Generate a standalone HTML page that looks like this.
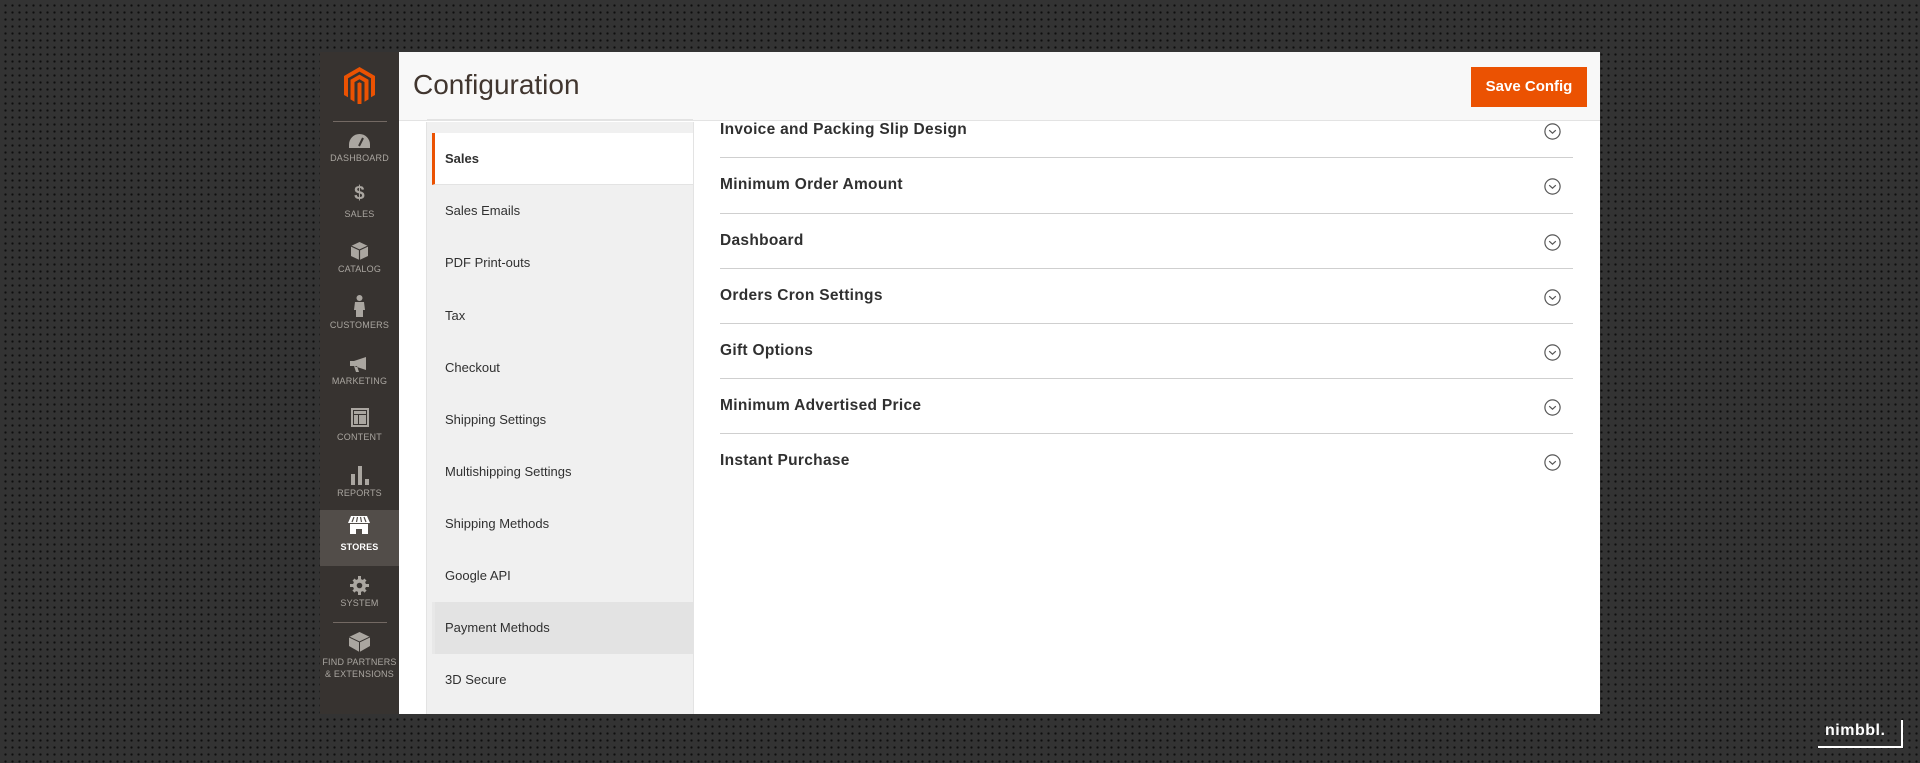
<!DOCTYPE html>
<html><head><meta charset="utf-8"><style>
*{margin:0;padding:0;box-sizing:border-box}
body{width:1920px;height:763px;overflow:hidden;background:#333;background-image:radial-gradient(#0e0e0e 1px,transparent 1.3px);background-size:7px 7px;background-position:2px 2px;font-family:"Liberation Sans","DejaVu Sans",sans-serif;position:relative}
.panel{position:absolute;left:320px;top:52px;width:1280px;height:662px;background:#fff;overflow:hidden}
.side{position:absolute;left:0;top:0;width:79px;height:662px;background:#373330}
.hdr{position:absolute;left:79px;top:0;right:0;height:69px;background:#f8f8f8;border-bottom:1px solid #e3e3e3}
.hdr h1{position:absolute;left:14px;top:17px;font-weight:normal;font-size:28px;color:#41362f}
.btn{position:absolute;left:1072px;top:15px;width:116px;height:40px;background:#eb5202;color:#fff;font-weight:bold;font-size:15px;text-align:center;line-height:40px}
.nav{position:absolute;left:106px;top:70px;width:268px;height:600px;background:#f0f0f0;border-left:1px solid #e3e3e3;border-right:1px solid #e3e3e3}
.nav div{position:absolute;left:0;width:266px;height:52px;font-size:13px;color:#303030;padding-left:18px;line-height:52px}
.si{position:absolute;left:0;width:79px;text-align:center;font-size:9px;color:#aaa6a0;letter-spacing:.2px}
.sec{position:absolute;left:400px;width:853px;font-size:15.5px;font-weight:bold;color:#303030;letter-spacing:.3px}
.ln{position:absolute;left:400px;width:853px;height:1px;background:#cfcfcf}
.ci{position:absolute;left:1224px;width:17px;height:17px}
</style></head><body>
<div class="panel">
 <div class="side">
  <svg style="position:absolute;left:24px;top:15px" width="31" height="37" viewBox="0 0 31 37"><path d="M15.5 0L31 9v19l-4 2.3V11.3L15.5 4.6 4 11.3v19L0 28V9z M6.5 12.8L15.5 7.6l9 5.2v19.6l-4 2.3V15.1l-5-2.8-5 2.8v19.6l-4-2.3z M13.5 16.3l2-1.1 2 1.1v20.4l-2 1.1-2-1.1z" fill="#eb5202"/></svg>
  <div style="position:absolute;left:13px;top:69px;width:54px;height:1px;background:#736963"></div>
  <svg style="position:absolute;left:29px;top:82px" width="21" height="14" viewBox="0 0 21 14"><path d="M10.5 0A10.5 10.5 0 0 0 0 10.5V14h21v-3.5A10.5 10.5 0 0 0 10.5 0z" fill="#aaa6a0"/><path d="M10 12l4-8" stroke="#373330" stroke-width="2"/></svg>
  <div class="si" style="top:101px">DASHBOARD</div>
  <div class="si" style="top:131px;font-size:19px;font-weight:bold">$</div>
  <div class="si" style="top:157px">SALES</div>
  <svg style="position:absolute;left:31px;top:190px" width="17" height="18" viewBox="0 0 17 18"><path d="M8.5 0L17 4v10l-8.5 4L0 14V4z" fill="#aaa6a0"/><path d="M0 4l8.5 4 8.5-4M8.5 8v10" stroke="#373330" stroke-width="1.2" fill="none"/></svg>
  <div class="si" style="top:212px">CATALOG</div>
  <svg style="position:absolute;left:33px;top:243px" width="13" height="22" viewBox="0 0 13 22"><circle cx="6.5" cy="3" r="3" fill="#aaa6a0"/><path d="M2 7h9l1 8h-2v7H3v-7H1z" fill="#aaa6a0"/></svg>
  <div class="si" style="top:268px">CUSTOMERS</div>
  <svg style="position:absolute;left:30px;top:305px" width="20" height="15" viewBox="0 0 20 15"><path d="M0 4h4l12-4v13L4 9H0zM4 9l2 6h3l-2-6z" fill="#aaa6a0"/></svg>
  <div class="si" style="top:324px">MARKETING</div>
  <svg style="position:absolute;left:31px;top:356px" width="18" height="19" viewBox="0 0 18 19"><path d="M0 0h18v19H0zM2 2v15h14V2zM3 3h12v3H3zM3 7h4v9H3zM8 7h7v9H8z" fill="#aaa6a0" fill-rule="evenodd"/></svg>
  <div class="si" style="top:380px">CONTENT</div>
  <svg style="position:absolute;left:31px;top:414px" width="18" height="19" viewBox="0 0 18 19"><path d="M0 8h4v11H0zM7 0h4v19H7zM14 13h4v6h-4z" fill="#aaa6a0"/></svg>
  <div class="si" style="top:436px">REPORTS</div>
  <div style="position:absolute;left:0;top:458px;width:79px;height:56px;background:#524d49"></div>
  <svg style="position:absolute;left:28px;top:464px" width="22" height="18" viewBox="0 0 22 18"><path d="M3 0h16l3 7H0z M2 8h18v10h-6v-5H8v5H2z" fill="#fff"/><path d="M6 1l-2 5M9.5 1l-1 5M12.5 1l1 5M16 1l2 5" stroke="#524d49" stroke-width="1.2"/></svg>
  <div class="si" style="top:490px;color:#fff;font-weight:bold">STORES</div>
  <svg style="position:absolute;left:30px;top:524px" width="19" height="19" viewBox="0 0 19 19"><circle cx="9.5" cy="9.5" r="6.5" fill="#aaa6a0"/><path d="M8 0h3v19H8zM0 8h19v3H0zM2.5 4.6l2.1-2.1 12 12-2.1 2.1zM14.4 2.5l2.1 2.1-12 12-2.1-2.1z" fill="#aaa6a0"/><circle cx="9.5" cy="9.5" r="2.8" fill="#373330"/></svg>
  <div class="si" style="top:546px">SYSTEM</div>
  <div style="position:absolute;left:13px;top:570px;width:54px;height:1px;background:#736963"></div>
  <svg style="position:absolute;left:29px;top:580px" width="21" height="20" viewBox="0 0 21 20"><path d="M10.5 0L21 5v9l-10.5 6L0 14V5z" fill="#aaa6a0"/><path d="M0 5l10.5 5 10.5-5M10.5 10v10" stroke="#373330" stroke-width="1" fill="none"/></svg>
  <div class="si" style="top:604px;line-height:12px">FIND PARTNERS<br>&amp; EXTENSIONS</div>
 </div>
 <div class="hdr"><h1>Configuration</h1><div class="btn">Save Config</div></div>
 <div class="nav">
  <div style="top:-60px;height:58px;border-bottom:1px solid #e3e3e3"></div>
  <div style="top:11px;background:#fff;border-left:3px solid #eb5202;left:5px;width:261px;padding-left:10px;font-weight:bold;border-bottom:1px solid #e3e3e3">Sales</div>
  <div style="top:63px">Sales Emails</div>
  <div style="top:115px">PDF Print-outs</div>
  <div style="top:168px">Tax</div>
  <div style="top:220px">Checkout</div>
  <div style="top:272px">Shipping Settings</div>
  <div style="top:324px">Multishipping Settings</div>
  <div style="top:376px">Shipping Methods</div>
  <div style="top:428px">Google API</div>
  <div style="top:480px;background:#e3e3e3;left:5px;width:261px;padding-left:10px;border-left:3px solid #e8e8e8">Payment Methods</div>
  <div style="top:532px">3D Secure</div>
 </div>
 <div class="sec" style="top:69px">Invoice and Packing Slip Design</div><div class="ln" style="top:105px"></div>
 <div class="sec" style="top:124px">Minimum Order Amount</div><div class="ln" style="top:161px"></div>
 <div class="sec" style="top:180px">Dashboard</div><div class="ln" style="top:216px"></div>
 <div class="sec" style="top:235px">Orders Cron Settings</div><div class="ln" style="top:271px"></div>
 <div class="sec" style="top:290px">Gift Options</div><div class="ln" style="top:326px"></div>
 <div class="sec" style="top:345px">Minimum Advertised Price</div><div class="ln" style="top:381px"></div>
 <div class="sec" style="top:400px">Instant Purchase</div>
 <svg class="ci" style="top:71px" viewBox="0 0 17 17"><circle cx="8.5" cy="8.5" r="7.6" fill="none" stroke="#555" stroke-width="1.2"/><path d="M5.2 7.2l3.3 3 3.3-3" fill="none" stroke="#555" stroke-width="1.2"/></svg>
 <svg class="ci" style="top:126px" viewBox="0 0 17 17"><circle cx="8.5" cy="8.5" r="7.6" fill="none" stroke="#555" stroke-width="1.2"/><path d="M5.2 7.2l3.3 3 3.3-3" fill="none" stroke="#555" stroke-width="1.2"/></svg>
 <svg class="ci" style="top:182px" viewBox="0 0 17 17"><circle cx="8.5" cy="8.5" r="7.6" fill="none" stroke="#555" stroke-width="1.2"/><path d="M5.2 7.2l3.3 3 3.3-3" fill="none" stroke="#555" stroke-width="1.2"/></svg>
 <svg class="ci" style="top:237px" viewBox="0 0 17 17"><circle cx="8.5" cy="8.5" r="7.6" fill="none" stroke="#555" stroke-width="1.2"/><path d="M5.2 7.2l3.3 3 3.3-3" fill="none" stroke="#555" stroke-width="1.2"/></svg>
 <svg class="ci" style="top:292px" viewBox="0 0 17 17"><circle cx="8.5" cy="8.5" r="7.6" fill="none" stroke="#555" stroke-width="1.2"/><path d="M5.2 7.2l3.3 3 3.3-3" fill="none" stroke="#555" stroke-width="1.2"/></svg>
 <svg class="ci" style="top:347px" viewBox="0 0 17 17"><circle cx="8.5" cy="8.5" r="7.6" fill="none" stroke="#555" stroke-width="1.2"/><path d="M5.2 7.2l3.3 3 3.3-3" fill="none" stroke="#555" stroke-width="1.2"/></svg>
 <svg class="ci" style="top:402px" viewBox="0 0 17 17"><circle cx="8.5" cy="8.5" r="7.6" fill="none" stroke="#555" stroke-width="1.2"/><path d="M5.2 7.2l3.3 3 3.3-3" fill="none" stroke="#555" stroke-width="1.2"/></svg>
</div>
<div style="position:absolute;left:1825px;top:722px;font-size:16px;font-weight:bold;color:#fff;letter-spacing:.5px">nimbbl.</div>
<div style="position:absolute;left:1818px;top:746px;width:85px;height:2px;background:#fff"></div>
<div style="position:absolute;left:1901px;top:720px;width:2px;height:28px;background:#fff"></div>
</body></html>
